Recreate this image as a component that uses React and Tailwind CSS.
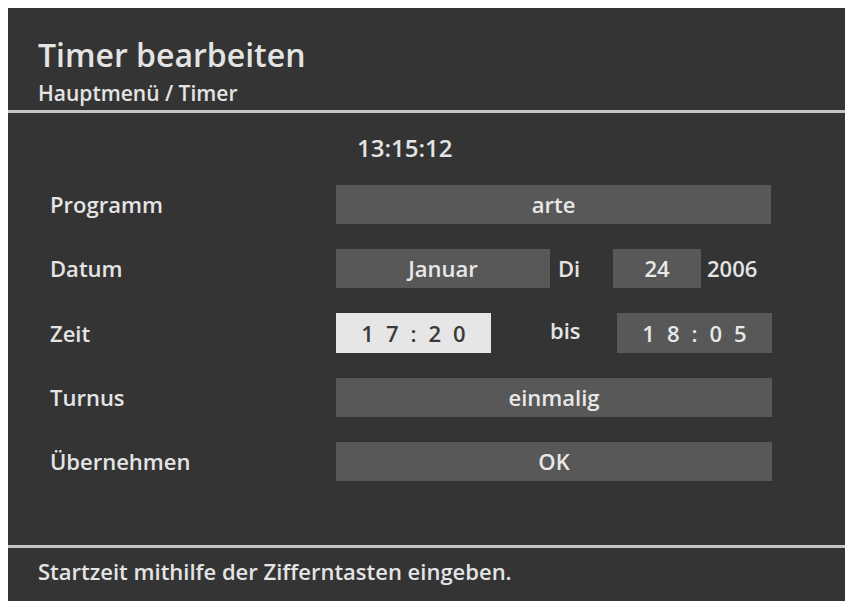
export default function App() {
  const font = { fontFamily: '"Open Sans", "Noto Sans", "DejaVu Sans", sans-serif' }

  const Box = ({ className = "", children }) => (
    <div className={`h-[39px] bg-[#585858] flex items-center justify-center text-[22px] text-[#e8e8e8] ${className}`}>
      {children}
    </div>
  )

  const Spaced = ({ text }) => (
    <div className="flex items-center gap-[12px]">
      {text.split("").map((c, i) => (
        <span key={i}>{c}</span>
      ))}
    </div>
  )

  return (
    <div className="w-[848px] h-[604px] bg-white pt-[8px] pl-[8px] pr-[3px] pb-[3px] font-semibold" style={font}>
      <div className="w-full h-full bg-[#343434] flex flex-col text-[#e4e4e4]">
        {/* header */}
        <div className="h-[102px] pl-[30px] pt-[28px]">
          <div className="text-[32px] leading-[38px]">Timer bearbeiten</div>
          <div className="text-[21px] leading-[24px] mt-[7px]">Hauptmenü / Timer</div>
        </div>
        <div className="h-[3px] bg-[#c4c4c4]" />

        {/* body */}
        <div className="h-[432px] flex flex-col">
          <div className="pl-[349px] pt-[21px] text-[24px] leading-[28px]">13:15:12</div>

          <div className="mt-[23px] flex flex-col gap-[25px] pl-[42px]">
            <div className="flex items-center">
              <div className="w-[286px] text-[22px]">Programm</div>
              <Box className="w-[435px]">arte</Box>
            </div>

            <div className="flex items-center">
              <div className="w-[286px] text-[22px]">Datum</div>
              <Box className="w-[214px]">Januar</Box>
              <div className="w-[63px] pl-[8px] text-[22px]">Di</div>
              <Box className="w-[88px]">24</Box>
              <div className="pl-[6px] text-[22px]">2006</div>
            </div>

            <div className="flex items-center">
              <div className="w-[286px] text-[22px]">Zeit</div>
              <div className="w-[155px] h-[40px] bg-[#e6e6e6] text-[#3a3a3a] text-[22px] flex items-center justify-center">
                <Spaced text="17:20" />
              </div>
              <div className="w-[126px] pl-[59px] text-[22px] -mt-[6px]">bis</div>
              <Box className="w-[155px] h-[40px]">
                <Spaced text="18:05" />
              </Box>
            </div>

            <div className="flex items-center">
              <div className="w-[286px] text-[22px]">Turnus</div>
              <Box className="w-[436px]">einmalig</Box>
            </div>

            <div className="flex items-center">
              <div className="w-[286px] text-[22px]">Übernehmen</div>
              <Box className="w-[436px]">OK</Box>
            </div>
          </div>
        </div>

        <div className="h-[3px] bg-[#c4c4c4]" />
        {/* footer */}
        <div className="flex-1 pl-[30px] pt-[9px] text-[22px] leading-[28px]">
          Startzeit mithilfe der Zifferntasten eingeben.
        </div>
      </div>
    </div>
  )
}
